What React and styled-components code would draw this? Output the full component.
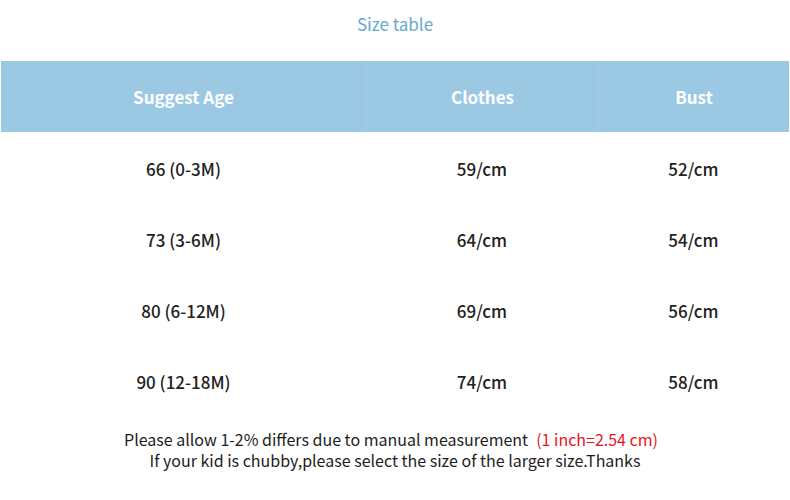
import React from 'react';
import styled, { createGlobalStyle } from 'styled-components';

let GlobalStyle = createGlobalStyle`
  body{
    margin:0;
    background:#fff;
    font-family: "Noto Sans CJK SC", "Noto Sans", sans-serif;
  }
`;

let Page = styled.div`
  width:790px;
  height:500px;
  display:flex;
  flex-direction:column;
  align-items:center;
`;

let Title = styled.div`
  height:50px;
  padding-top:12px;
  box-sizing:border-box;
  font-size:17px;
  color:#64a8cf;
  line-height:24px;
`;

let Table = styled.div`
  width:788px;
  margin-top:11px;
  display:grid;
  grid-template-columns:365px 232px 191px;
`;

let HeadCell = styled.div`
  height:71px;
  background:#9bc9e4;
  color:#fff;
  font-weight:700;
  font-size:17px;
  display:flex;
  align-items:center;
  justify-content:center;
  border-left:${({first})=> first ? '0' : '1px solid #a3cde6'};
`;

let Cell = styled.div`
  height:71px;
  display:flex;
  align-items:center;
  justify-content:center;
  font-size:17px;
  font-weight:500;
  color:#222;
  padding-top:1px;
  box-sizing:border-box;
`;

let Note = styled.div`
  margin-top:13px;
  text-align:center;
  font-size:16px;
  line-height:21px;
  color:#1e1e1e;
`;

let NoteLine = styled.div`
  padding-right:${({shift})=> shift ? '8px' : '0'};
`;

let Red = styled.span`
  color:#e8141b;
  margin-left:8px;
`;

let rows = [
  ['66 (0-3M)', '59/cm', '52/cm'],
  ['73 (3-6M)', '64/cm', '54/cm'],
  ['80 (6-12M)', '69/cm', '56/cm'],
  ['90 (12-18M)', '74/cm', '58/cm'],
];

let App = () => {
  return(
    <Page>
      <GlobalStyle />
      <Title>Size table</Title>
      <Table>
        <HeadCell first>Suggest Age</HeadCell>
        <HeadCell>Clothes</HeadCell>
        <HeadCell>Bust</HeadCell>
        {rows.map((r)=> r.map((c,i)=> <Cell key={r[0]+i}>{c}</Cell>))}
      </Table>
      <Note>
        <NoteLine shift>Please allow 1-2% differs due to manual measurement<Red>(1 inch=2.54 cm)</Red></NoteLine>
        <NoteLine>If your kid is chubby,please select the size of the larger size.Thanks</NoteLine>
      </Note>
    </Page>
  )
}

export default App;
